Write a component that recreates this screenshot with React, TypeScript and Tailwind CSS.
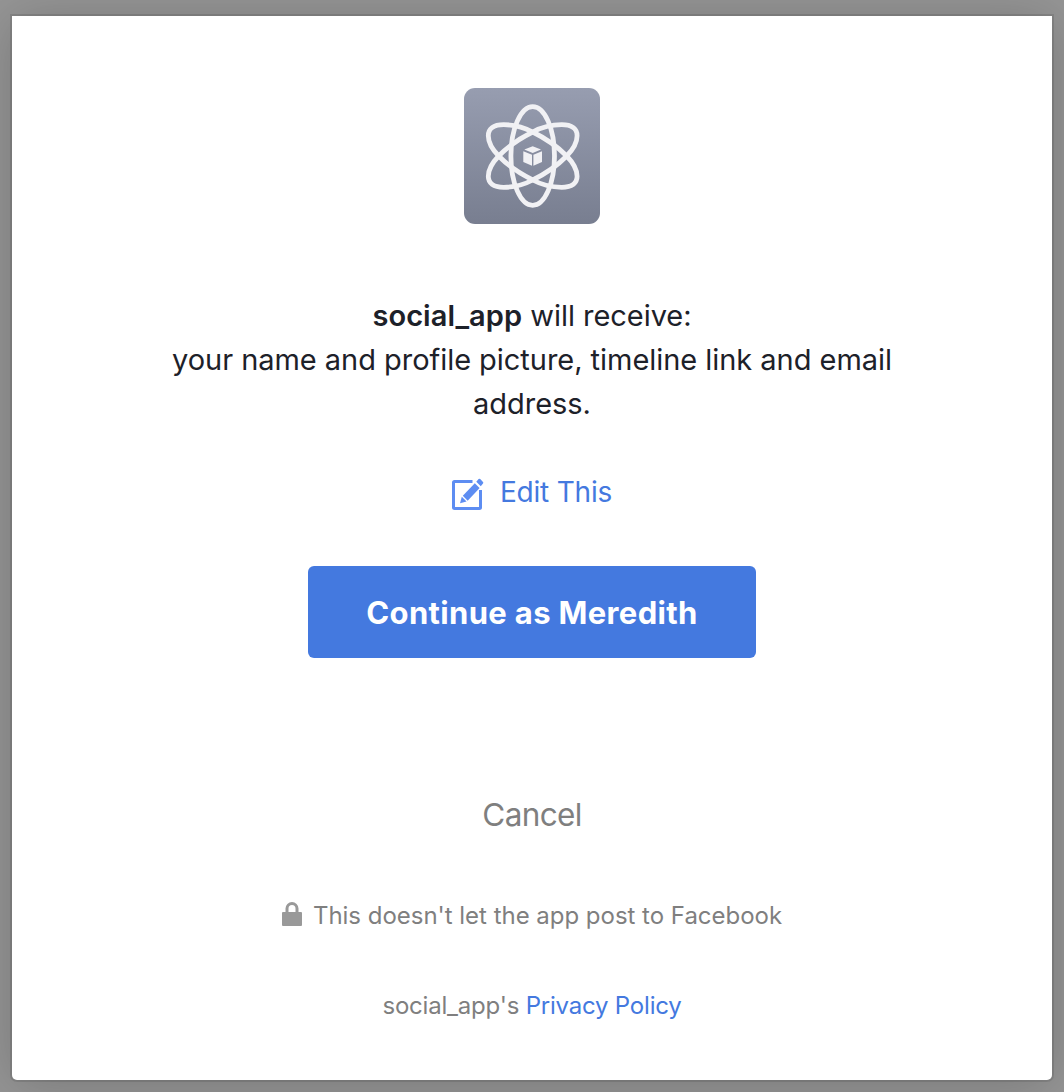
const ORBIT =
  "M0-24C9-28.800 20-31.300 29-31.300C39.500-31.300 44.400-27 44.400-20.300C44.400-13.500 40-6.200 34 0C24.500 9.800 12.500 17.800 0 24C-9 28.800-20 31.300-29 31.300C-39.500 31.300-44.400 27-44.400 20.300C-44.400 13.500-40 6.200-34 0C-24.500-9.800-12.500-17.800 0-24Z";

function AppLogo() {
  return (
    <svg width="136" height="136" viewBox="0 0 136 136" className="block">
      <defs>
        <linearGradient id="tile" x1="0" y1="0" x2="0" y2="1">
          <stop offset="0" stopColor="#979db0" />
          <stop offset="1" stopColor="#787e90" />
        </linearGradient>
      </defs>
      <rect width="136" height="136" rx="11" fill="url(#tile)" />
      <g fill="none" stroke="#f1f1f4" strokeWidth="4.8" transform="translate(68.7 68)">
        <ellipse rx="21.8" ry="49.3" />
        <path d={ORBIT} />
        <path d={ORBIT} transform="scale(-1 1)" />
      </g>
      <g fill="#f1f1f4">
        <path d="M60.3 61.6 68.7 58.2 77 61.6 68.7 65Z" />
        <path d="M59.3 63.3 68 66.7V77.8L59.3 74Z" />
        <path d="M78 63.3 69.4 66.7V77.8L78 74Z" />
      </g>
    </svg>
  );
}

function EditIcon() {
  return (
    <svg width="34" height="34" viewBox="0 0 34 34" className="block overflow-visible">
      <path
        d="M22.500 4.500H4.500a1 1 0 0 0-1 1V30.500a1 1 0 0 0 1 1H29.500a1 1 0 0 0 1-1V13"
        fill="none"
        stroke="#5d8df2"
        strokeWidth="3"
      />
      <g fill="#5d8df2">
        <path d="M12.800 18.700 24.800 6.200 29.600 10.900 17.700 23.700Z" />
        <path d="M26.300 4.700 28.600 2.100Q29.400 1.400 30.200 2.100L33 5Q33.700 5.800 33 6.600L30.800 9.200Z" />
        <path d="M11.800 19.800 16.600 24.600 10 26.200Z" />
      </g>
    </svg>
  );
}

function LockIcon() {
  return (
    <svg width="20" height="24" viewBox="0 0 20 24" className="block">
      <path d="M5 11V6.500a5 5 0 0 1 10 0V11" fill="none" stroke="#999" strokeWidth="3" />
      <rect y="10" width="20" height="14" rx="1" fill="#999" />
    </svg>
  );
}

export default function App() {
  return (
    <div className="h-[1092px] w-[1064px] overflow-hidden bg-[#959595] px-3 pt-4 font-['Inter',sans-serif]">
      <main className="flex h-[1064px] flex-col items-center rounded-b-[5px] bg-white pt-[72px] whitespace-nowrap shadow-[0_0_0_2px_rgba(0,0,0,0.1),0_4px_52px_rgba(0,0,0,0.2)]">
        <AppLogo />
        <p className="mt-[70px] text-center text-[29px] leading-[44px] tracking-[-0.04px] text-[#1d2129]">
          <span><b className="font-semibold tracking-[0.06px]">social_app</b> will receive:</span>
          <br />
          <span>your name and profile picture, timeline link and email</span>
          <br />
          <span>address.</span>
        </p>
        <a className="mt-[44px] mr-[2px] flex h-[44px] items-center text-[28px] leading-[44px] tracking-[-0.2px] text-[#4479df]">
          <span className="mr-4 pt-1"><EditIcon /></span>
          <span>Edit This</span>
        </a>
        <button className="mt-[52px] flex h-[92px] w-[448px] items-center justify-center rounded-[6px] bg-[#4479df] pt-[2px] text-[31px] font-bold tracking-[0.35px] text-white">
          <span>Continue as Meredith</span>
        </button>
        <button className="mt-[135px] h-[44px] text-[31.500px] leading-[44px] tracking-[-0.65px] text-[#7f7f7f]">
          <span>Cancel</span>
        </button>
        <div className="mt-[59px] flex h-[40px] items-center text-[24px] leading-[40px] tracking-[-0.02px] text-[#7f7f7f]">
          <span className="mr-[11px] -mt-1"><LockIcon /></span>
          <span>This doesn't let the app post to Facebook</span>
        </div>
        <p className="mt-[50px] text-[24px] leading-[40px] tracking-[-0.21px] text-[#7f7f7f]">
          <span>social_app's <a className="text-[#4479df]">Privacy Policy</a></span>
        </p>
      </main>
    </div>
  );
}
